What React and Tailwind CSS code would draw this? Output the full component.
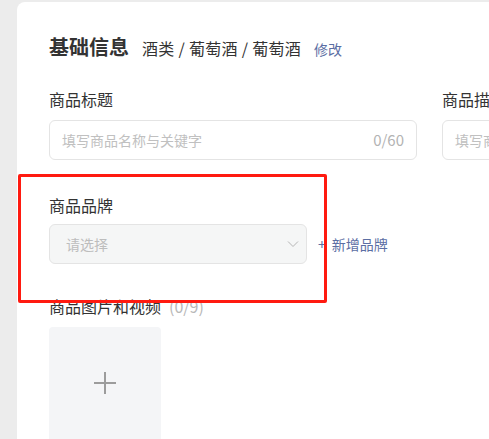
import React from "react";

export default function App() {
  const font = { fontFamily: '"Noto Sans CJK SC", "Noto Sans", sans-serif' };
  return (
    <div
      className="w-[489px] h-[439px] overflow-hidden bg-[#ececec] pl-[17px] pt-[2px] relative"
      style={font}
    >
      <div className="h-[480px] w-[600px] bg-white rounded-tl-[8px] pl-[32px] pt-[32px]">
        {/* Title row */}
        <div className="flex items-baseline h-[26px]">
          <span className="text-[20px] font-bold text-[#333333] leading-[26px]">基础信息</span>
          <span className="ml-[13px] text-[16px] tracking-[0.3px] text-[#333333] leading-[26px]">酒类 / 葡萄酒 / 葡萄酒</span>
          <span className="ml-[13px] text-[14px] text-[#5b6ea3] leading-[26px]">修改</span>
        </div>

        {/* Title + description */}
        <div className="flex gap-[25px] mt-[29px]">
          <div className="w-[368px] shrink-0">
            <div className="text-[16px] leading-[20px] text-[#333333]">商品标题</div>
            <div className="mt-[11px] h-[40px] border border-[#e4e4e4] rounded-[6px] flex items-center justify-between pl-[12px] pr-[12px]">
              <span className="text-[14px] text-[#c0c0c0]">填写商品名称与关键字</span>
              <span className="text-[15px] text-[#b3b3b3]">0/60</span>
            </div>
          </div>
          <div className="w-[200px] shrink-0">
            <div className="text-[16px] leading-[20px] text-[#333333] whitespace-nowrap">商品描述</div>
            <div className="mt-[11px] h-[40px] border border-[#e4e4e4] rounded-[6px] flex items-center pl-[12px]">
              <span className="text-[14px] text-[#c0c0c0] whitespace-nowrap">填写商品描述</span>
            </div>
          </div>
        </div>

        {/* Brand */}
        <div className="mt-[35px]">
          <div className="text-[16px] leading-[20px] text-[#333333]">商品品牌</div>
          <div className="mt-[9px] flex items-center">
            <div className="w-[258px] h-[40px] bg-[#f5f6f6] border border-[#e4e4e4] rounded-[6px] flex items-center justify-between pl-[16px] pr-[7px]">
              <span className="text-[14px] text-[#bdbdbd]">请选择</span>
              <svg width="12" height="8" viewBox="0 0 12 8" fill="none">
                <path d="M1 1.5L6 6.5L11 1.5" stroke="#b5b5b5" strokeWidth="1" />
              </svg>
            </div>
            <span className="ml-[11px] text-[14px] text-[#5b6ea3] flex items-center">
              <span className="mr-[6px]">+</span>新增品牌
            </span>
          </div>
        </div>

        {/* Images */}
        <div className="mt-[32px]">
          <div className="text-[16px] leading-[20px] text-[#333333]">
            商品图片和视频<span className="ml-[8px] text-[#b8b8b8]">(0/9)</span>
          </div>
          <div className="mt-[11px] w-[112px] h-[120px] bg-[#f4f5f7] rounded-[4px] flex items-center justify-center pb-[9px]">
            <svg width="22" height="22" viewBox="0 0 22 22">
              <path d="M11 0V22M0 11H22" stroke="#9c9c9c" strokeWidth="2" />
            </svg>
          </div>
        </div>
      </div>

      {/* Red annotation box */}
      <div className="absolute left-[18px] top-[174px] w-[309px] h-[129px] border-[3px] border-[#ff1a10] rounded-[2px]" />
    </div>
  );
}
